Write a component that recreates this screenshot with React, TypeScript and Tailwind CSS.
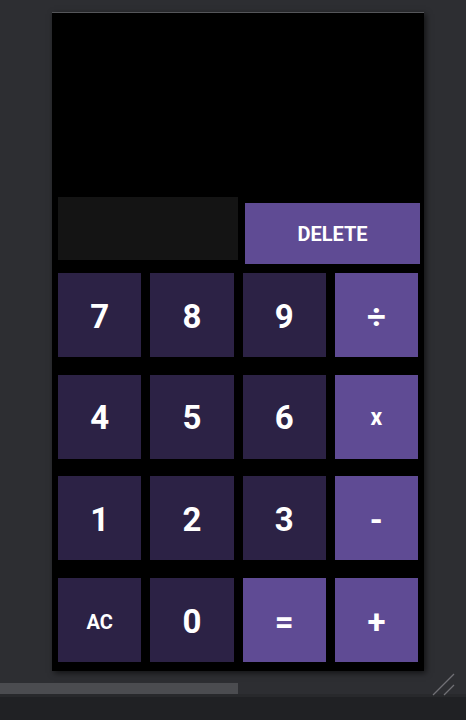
import React from "react";

const dark = "bg-[#2c2245]";
const light = "bg-[#5f4b94]";

type K = { label: string; tone: "d" | "l"; size?: string };

const keys: K[] = [
  { label: "7", tone: "d" },
  { label: "8", tone: "d" },
  { label: "9", tone: "d" },
  { label: "÷", tone: "l" },
  { label: "4", tone: "d" },
  { label: "5", tone: "d" },
  { label: "6", tone: "d" },
  { label: "x", tone: "l", size: "text-[23px]" },
  { label: "1", tone: "d" },
  { label: "2", tone: "d" },
  { label: "3", tone: "d" },
  { label: "-", tone: "l" },
  { label: "AC", tone: "d", size: "text-[20px]" },
  { label: "0", tone: "d" },
  { label: "=", tone: "l" },
  { label: "+", tone: "l" },
];

export default function App() {
  return (
    <div
      className="relative w-[466px] h-[720px] bg-[#2d2e32] overflow-hidden flex flex-col"
      style={{ fontFamily: "Roboto, 'Liberation Sans', sans-serif" }}
    >
      <div className="ml-[52px] mt-[12px] w-[372px] h-[659px] bg-black border-t border-[#55565a] shadow-[2px_2px_6px_rgba(0,0,0,0.6)] flex flex-col">
        <div className="h-[184px] shrink-0" />
        <div className="flex items-start pl-[6px]">
          <div className="w-[180px] h-[63px] bg-[#141414]" />
          <div className={`ml-[7px] mt-[6px] w-[175px] h-[61px] ${light} flex items-center justify-center text-white font-bold text-[20px]`}>
            DELETE
          </div>
        </div>
        <div className="mt-[9px] px-[6px] grid grid-cols-4 gap-x-[9px] gap-y-[17.7px]">
          {keys.map((k, i) => (
            <div
              key={i}
              className={`h-[84px] ${k.tone === "d" ? dark : light} flex items-center justify-center text-white font-bold pt-[3px] ${k.size ?? "text-[33px]"}`}
            >
              {k.label}
            </div>
          ))}
        </div>
      </div>
      <div className="mt-[12px] h-[11px] flex">
        <div className="w-[238px] h-full bg-[#4b4c50]" />
      </div>
      <div className="h-[3px] bg-[#28292c]" />
      <div className="flex-1 bg-[#202124]" />
      <svg className="absolute right-[10px] bottom-[24px]" width="24" height="24" viewBox="0 0 24 24">
        <line x1="1" y1="23" x2="22" y2="2" stroke="#707075" strokeWidth="1.3" />
        <line x1="12" y1="23" x2="22" y2="13" stroke="#707075" strokeWidth="1.3" />
      </svg>
    </div>
  );
}
